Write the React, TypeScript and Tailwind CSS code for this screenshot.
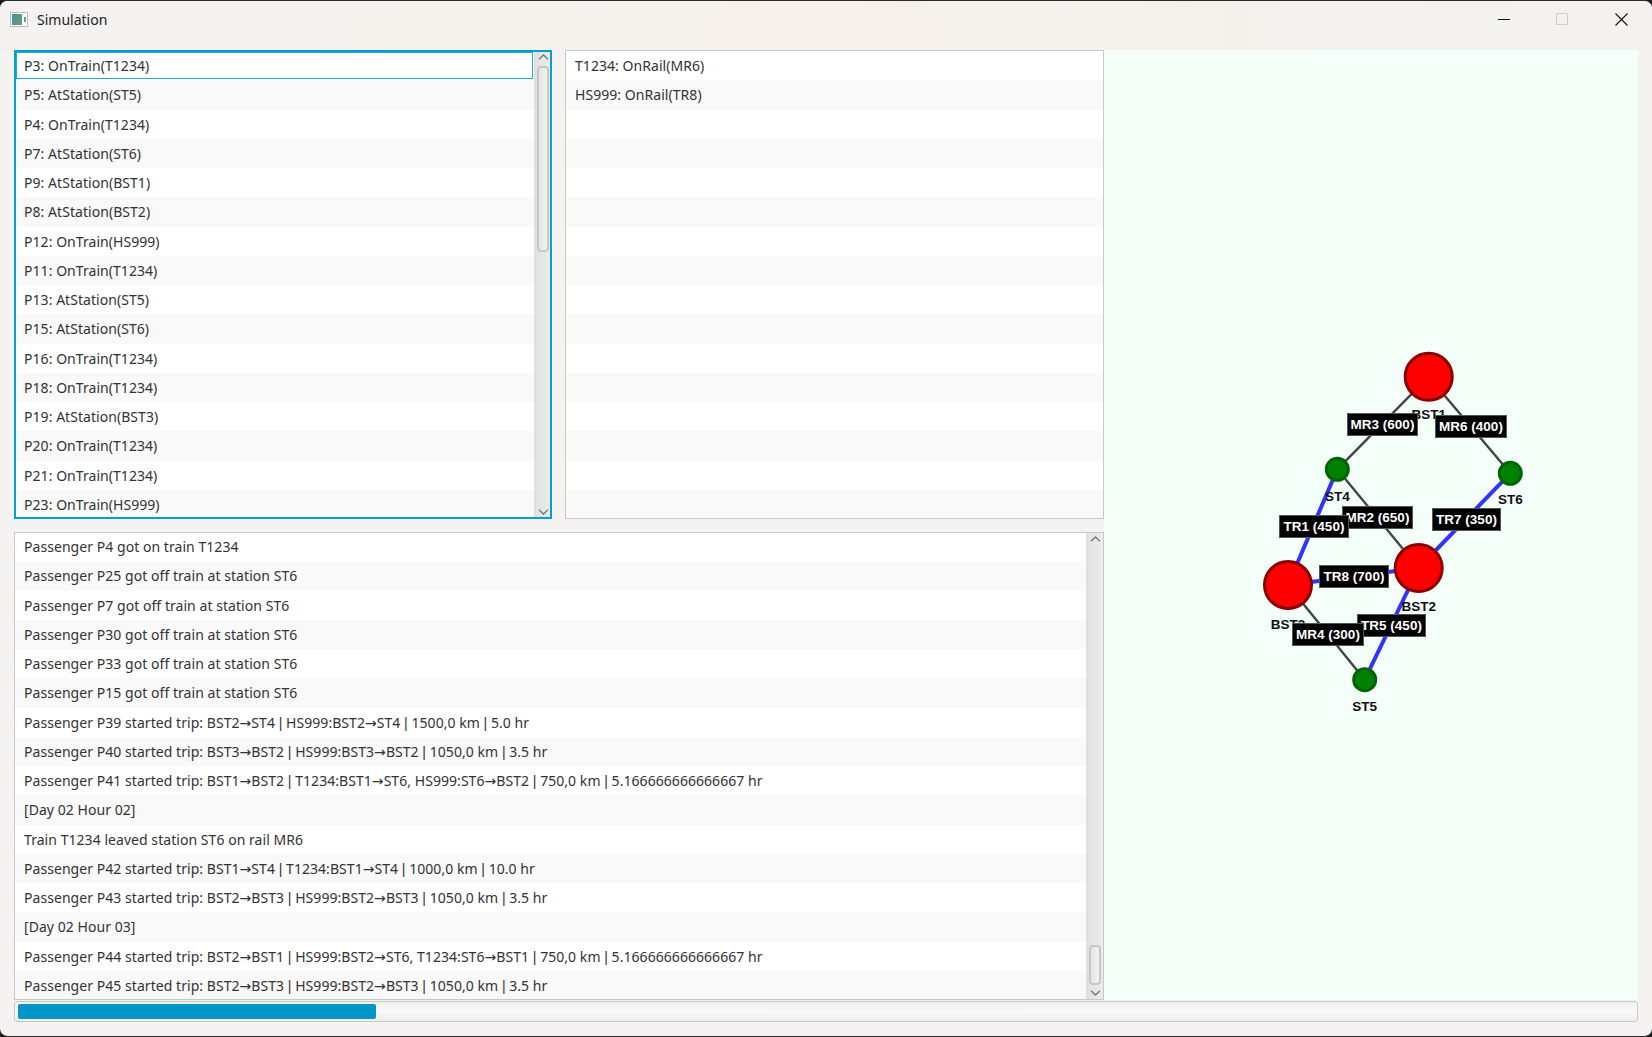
/**
 * Simulation window: passenger list, train list, event log, rail network graph.
 */
const passengers = [
  'P3: OnTrain(T1234)',
  'P5: AtStation(ST5)',
  'P4: OnTrain(T1234)',
  'P7: AtStation(ST6)',
  'P9: AtStation(BST1)',
  'P8: AtStation(BST2)',
  'P12: OnTrain(HS999)',
  'P11: OnTrain(T1234)',
  'P13: AtStation(ST5)',
  'P15: AtStation(ST6)',
  'P16: OnTrain(T1234)',
  'P18: OnTrain(T1234)',
  'P19: AtStation(BST3)',
  'P20: OnTrain(T1234)',
  'P21: OnTrain(T1234)',
  'P23: OnTrain(HS999)',
];

const trains = ['T1234: OnRail(MR6)', 'HS999: OnRail(TR8)', ...Array(14).fill('')];

const logLines = [
  'Passenger P4 got on train T1234',
  'Passenger P25 got off train at station ST6',
  'Passenger P7 got off train at station ST6',
  'Passenger P30 got off train at station ST6',
  'Passenger P33 got off train at station ST6',
  'Passenger P15 got off train at station ST6',
  'Passenger P39 started trip: BST2→ST4 | HS999:BST2→ST4 | 1500,0 km | 5.0 hr',
  'Passenger P40 started trip: BST3→BST2 | HS999:BST3→BST2 | 1050,0 km | 3.5 hr',
  'Passenger P41 started trip: BST1→BST2 | T1234:BST1→ST6, HS999:ST6→BST2 | 750,0 km | 5.166666666666667 hr',
  '[Day 02 Hour 02]',
  'Train T1234 leaved station ST6 on rail MR6',
  'Passenger P42 started trip: BST1→ST4 | T1234:BST1→ST4 | 1000,0 km | 10.0 hr',
  'Passenger P43 started trip: BST2→BST3 | HS999:BST2→BST3 | 1050,0 km | 3.5 hr',
  '[Day 02 Hour 03]',
  'Passenger P44 started trip: BST2→BST1 | HS999:BST2→ST6, T1234:ST6→BST1 | 750,0 km | 5.166666666666667 hr',
  'Passenger P45 started trip: BST2→BST3 | HS999:BST2→BST3 | 1050,0 km | 3.5 hr',
];

// graph coordinates are window coordinates, the pane starts at (1104, 50)
const ox = 1104;
const oy = 50;
const nodes: Record<string, { x: number; y: number; r: number; ly: number }> = {
  BST1: { x: 1428.7, y: 376.7, r: 23.5, ly: 419 },
  ST4: { x: 1337.3, y: 469.3, r: 11, ly: 501 },
  ST6: { x: 1510.3, y: 473.3, r: 11, ly: 504 },
  BST3: { x: 1288, y: 585, r: 23.5, ly: 629 },
  BST2: { x: 1418.7, y: 568, r: 23.5, ly: 611 },
  ST5: { x: 1364.7, y: 679.7, r: 11, ly: 711 },
};

const mainEdges = [['BST1', 'ST4'], ['BST1', 'ST6'], ['ST4', 'BST2'], ['BST3', 'ST5']];
const highSpeedEdges = [['ST4', 'BST3'], ['ST6', 'BST2'], ['BST3', 'BST2'], ['BST2', 'ST5']];

const edgeLabels = [
  { text: 'MR3 (600)', x: 1347, y: 413, w: 70 },
  { text: 'MR6 (400)', x: 1435, y: 415, w: 71 },
  { text: 'MR2 (650)', x: 1342, y: 506, w: 70 },
  { text: 'TR1 (450)', x: 1279, y: 515, w: 69 },
  { text: 'TR7 (350)', x: 1432, y: 508, w: 68 },
  { text: 'TR8 (700)', x: 1319, y: 565, w: 69 },
  { text: 'TR5 (450)', x: 1357, y: 614, w: 68 },
  { text: 'MR4 (300)', x: 1292, y: 623, w: 71 },
];

const graphFont = { fontFamily: '"Liberation Sans", Arial, sans-serif' };
const arrowFont = { fontFamily: '"DejaVu Sans", sans-serif' };

function NetworkGraph() {
  return (
    <svg className="block h-full w-full" style={graphFont}>
      <g transform={`translate(${-ox} ${-oy})`}>
        {mainEdges.map(([a, b]) => (
          <line key={a + b} x1={nodes[a].x} y1={nodes[a].y} x2={nodes[b].x} y2={nodes[b].y} stroke="#444444" strokeWidth={2.4} />
        ))}
        {highSpeedEdges.map(([a, b]) => (
          <line key={a + b} x1={nodes[a].x} y1={nodes[a].y} x2={nodes[b].x} y2={nodes[b].y} stroke="#3333ff" strokeWidth={4} />
        ))}
        {Object.entries(nodes).map(([name, n]) => (
          <g key={name}>
            <circle cx={n.x} cy={n.y} r={n.r} fill={n.r > 20 ? '#ff0000' : '#008000'} stroke={n.r > 20 ? '#8b0000' : '#006400'} strokeWidth={3} />
            <text x={n.x} y={n.ly} textAnchor="middle" fontSize={13.5} fontWeight={700} fill="#111111">
              {name}
            </text>
          </g>
        ))}
        {edgeLabels.map((l) => (
          <g key={l.text}>
            <rect x={l.x + 0.5} y={l.y + 0.5} width={l.w} height={22} fill="#000000" stroke="#555555" strokeWidth={1} />
            <text x={l.x + l.w / 2 + 0.5} y={l.y + 16} textAnchor="middle" fontSize={13.5} fontWeight={700} fill="#ffffff">
              {l.text}
            </text>
          </g>
        ))}
      </g>
    </svg>
  );
}

function VerticalScrollbar({ thumbTop, thumbHeight }: { thumbTop: number; thumbHeight: number }) {
  return (
    <div className="relative flex w-[17px] shrink-0 flex-col items-center justify-between bg-gradient-to-r from-[#e0e0e0] to-[#ececec] py-[3px] pl-px">
      <svg width="11" height="6" viewBox="0 0 11 6" fill="none" stroke="#777777" strokeWidth="1.3">
        <path d="M1 5.2 5.5 1 10 5.2" />
      </svg>
      <div
        className="absolute left-[3px] right-[2px] rounded-[4px] border-2 border-[#c6c6c6] bg-gradient-to-r from-[#e4e4e4] to-[#f2f2f2]"
        style={{ top: thumbTop, height: thumbHeight }}
      />
      <svg width="11" height="6" viewBox="0 0 11 6" fill="none" stroke="#777777" strokeWidth="1.3">
        <path d="M1 .8 5.5 5 10 .8" />
      </svg>
    </div>
  );
}

// pipes and arrows come from other faces: Noto's own are far off the reference's widths
function RowText({ text }: { text: string }) {
  return (
    <>
      {text.split(/([|→])/).map((part, i) => {
        if (part === '|') return <span key={i} style={graphFont}>|</span>;
        if (part === '→') return <span key={i} style={arrowFont}>→</span>;
        return part;
      })}
    </>
  );
}

function ListRows({ rows, focusFirst, className = '' }: { rows: string[]; focusFirst?: boolean; className?: string }) {
  return (
    <div className={'min-w-0 flex-1 overflow-hidden ' + className}>
      {rows.map((row, i) => (
        <div
          key={i}
          className={
            'h-[29.25px] whitespace-nowrap px-[9px] leading-[29px] tracking-[0.05px] text-[#333333] ' +
            (i % 2 === 1 ? 'bg-[#f9f9f9] ' : 'bg-white ') +
            (focusFirst && i === 0 ? 'outline-1 -outline-offset-2 outline-[#1fa9db]' : '')
          }
        >
          <RowText text={row} />
        </div>
      ))}
    </div>
  );
}

export default function App() {
  return (
    <div className="h-[1037px] w-[1652px] overflow-hidden bg-[#1c1c1c]">
      <div
        className="relative flex h-full w-full flex-col overflow-hidden rounded-[8px] border-y border-[#2a2a2a] bg-[#f4f3f2] text-[14px]"
        style={{ fontFamily: '"Noto Sans", sans-serif' }}
      >
        <div className="absolute left-[720px] top-[-1px] h-px w-[52px] bg-[#c9a961]" />
        <header className="flex h-[49px] shrink-0 items-center bg-gradient-to-r from-[#f4f2f1] via-[#f6f1ea] to-[#f3f2f1] pb-[13px]">
          <div className="ml-[10px] mr-[9px] flex h-[15px] w-[18px] items-center border border-[#bdbdbd] bg-white px-px">
            <div className="h-[11px] w-[11px] bg-gradient-to-br from-[#3f8fa0] to-[#6ba070]" />
            <div className="ml-[2px] h-[5px] w-[2px] bg-[#5aa0b0]" />
          </div>
          <span className="text-[14px] text-[#222222]">Simulation</span>
          <div className="ml-auto flex items-center">
            <div className="mr-[46px] h-px w-[12px] bg-[#111111]" />
            <div className="mr-[47px] h-[12px] w-[12px] rounded-[1px] border border-[#cccccc]" />
            <svg width="13" height="13" viewBox="0 0 13 13" stroke="#111111" strokeWidth="1.1" className="mr-[24px]">
              <path d="M.5.5 12.5 12.5M12.5.5.5 12.5" />
            </svg>
          </div>
        </header>

        <div className="flex min-h-0 flex-1 pl-[14px] pr-[14px]">
          <div className="flex w-[1090px] shrink-0 flex-col">
            <div className="flex h-[469px] shrink-0 gap-[13px]">
              <section className="relative flex h-full w-[538px] border border-[#039ed3]">
                <ListRows rows={passengers} focusFirst />
                <VerticalScrollbar thumbTop={15} thumbHeight={186} />
                <div className="pointer-events-none absolute -inset-px border-2 border-[#039ed3]" />
              </section>
              <section className="flex h-full w-[539px] overflow-hidden border border-[#c8c8c8]">
                <ListRows rows={trains} />
              </section>
            </div>
            <section className="mt-[13px] flex h-[468px] shrink-0 overflow-hidden border border-[#c8c8c8]">
              <ListRows rows={logLines} className="-mt-px" />
              <VerticalScrollbar thumbTop={412} thumbHeight={40} />
            </section>
          </div>
          <section className="min-w-0 flex-1 bg-[#f5fffa]">
            <NetworkGraph />
          </section>
        </div>

        <div className="mx-[14px] mb-[14px] mt-px flex h-[21px] shrink-0 items-center rounded-[3px] border border-[#c8c8c8] bg-gradient-to-b from-[#f0f0f0] via-[#f8f8f8] to-[#eeeeee] px-[3px]">
          <div className="h-[15px] w-[358px] rounded-[2px] bg-[#0096c9]" />
        </div>
      </div>
    </div>
  );
}
